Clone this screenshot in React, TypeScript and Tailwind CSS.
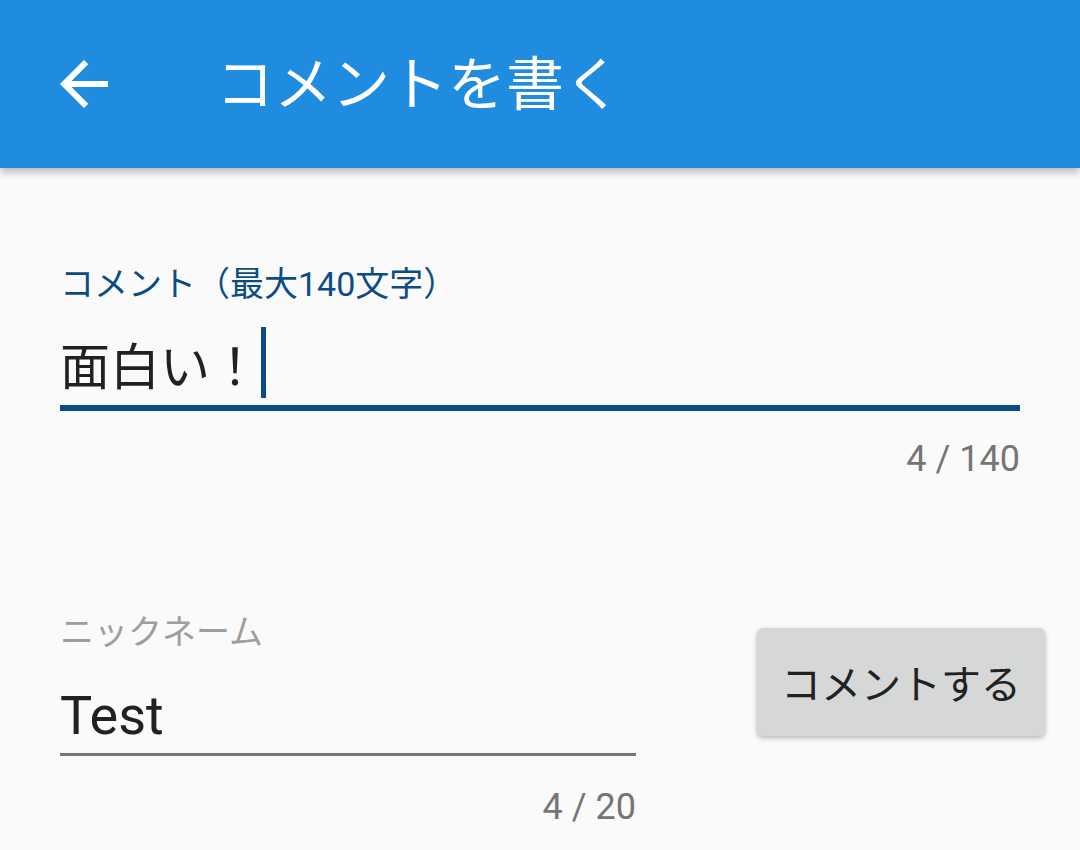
import React from 'react';

const font = { fontFamily: 'Roboto, "Noto Sans CJK JP", sans-serif' };

function ArrowBack() {
  return (
    <svg viewBox="0 0 24 24" className="w-[72px] h-[72px]" fill="white">
      <path d="M20 11H7.83l5.59-5.59L12 4l-8 8 8 8 1.41-1.41L7.83 13H20v-2z" />
    </svg>
  );
}

export default function App() {
  return (
    <div className="w-[1080px] h-[850px] bg-[#fafafa] overflow-hidden" style={font}>
      {/* App bar */}
      <div className="relative z-10 h-[168px] bg-[#1f8ce0] flex items-center shadow-[0_4px_8px_rgba(0,0,0,0.28)]">
        <div className="ml-[48px] flex items-center">
          <ArrowBack />
        </div>
        <h1 className="ml-[96px] mt-[2px] text-[58px] leading-[72px] text-white font-normal">コメントを書く</h1>
      </div>

      <div className="px-[60px] pt-[96px]">
        {/* Comment field */}
        <div>
          <div className="text-[34px] leading-[40px] text-[#0b4c85]">コメント（最大140文字）</div>
          <div className="mt-[27px] h-[74px] flex items-center text-[50px] leading-[72px] text-[#212121]">
            <span>面白い！</span>
            <span className="ml-[1px] mb-[12px] w-[5px] h-[71px] bg-[#0b4c85]"></span>
          </div>
          <div className="h-[6px] bg-[#0b4c85]"></div>
          <div className="mt-[26px] text-right text-[36px] leading-[44px] text-[#757575]">4 / 140</div>
        </div>

        {/* Nickname + button */}
        <div className="mt-[131px] flex items-start">
          <div className="w-[576px] shrink-0">
            <div className="text-[34px] leading-[40px] text-[#9e9e9e]">ニックネーム</div>
            <div className="mt-[27px] h-[74px] flex items-center text-[54px] leading-[72px] text-[#212121]">
              <span>Test</span>
            </div>
            <div className="h-[3px] bg-[#757575]"></div>
            <div className="mt-[29px] text-right text-[36px] leading-[44px] text-[#757575]">4 / 20</div>
          </div>
          <button className="shrink-0 ml-[121px] mt-[16px] w-[288px] h-[108px] pt-[8px] rounded-[6px] bg-[#d6d7d7] text-[40px] text-[#212121] shadow-[0_2px_5px_rgba(0,0,0,0.28)] flex items-center justify-center">
            コメントする
          </button>
        </div>
      </div>
    </div>
  );
}
